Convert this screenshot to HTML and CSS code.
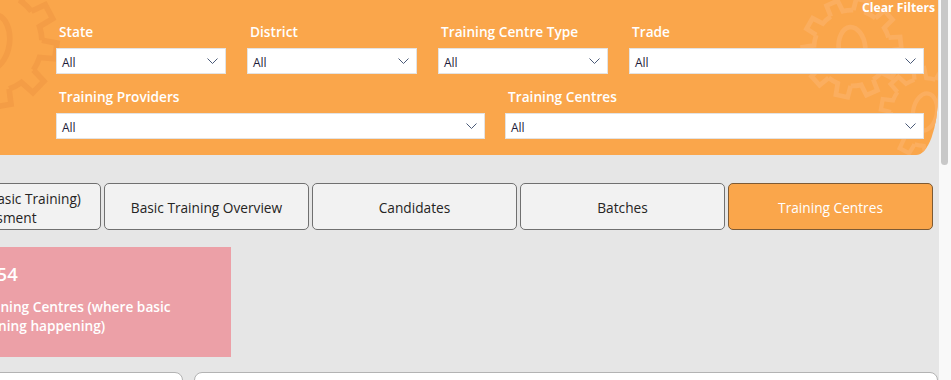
FILE: index.html
```html
<!DOCTYPE html>
<html lang="en">
<head>
<meta charset="utf-8">
<title>Training Centres</title>
<link rel="stylesheet" href="styles.css">
</head>
<body>
<div class="page">
  <div class="main">
    <header class="filters">
      <svg class="deco" width="938" height="155" viewBox="0 0 938 155" aria-hidden="true">
        <defs>
          <path id="tooth" d="M39.39 -6.95 L51.61 -6.34 L51.61 6.34 L39.39 6.95 A40 40 0 0 1 35.95 17.53" />
          <g id="gear">
            <use href="#tooth" />
            <use href="#tooth" transform="rotate(36)" />
            <use href="#tooth" transform="rotate(72)" />
            <use href="#tooth" transform="rotate(108)" />
            <use href="#tooth" transform="rotate(144)" />
            <use href="#tooth" transform="rotate(180)" />
            <use href="#tooth" transform="rotate(216)" />
            <use href="#tooth" transform="rotate(252)" />
            <use href="#tooth" transform="rotate(288)" />
            <use href="#tooth" transform="rotate(324)" />
            <ellipse cx="0" cy="0" rx="14" ry="22" />
          </g>
        </defs>
        <g class="g-dark">
          <use href="#gear" transform="translate(-8 42) scale(1.25) rotate(8)" />
        </g>
        <g class="g-light">
          <use href="#gear" transform="translate(852 48) scale(0.95) rotate(-6)" />
          <use href="#gear" transform="translate(925 112) scale(0.85) rotate(10)" />
        </g>
      </svg>
      <div class="clear">Clear Filters</div>
      <div class="row row1">
        <div class="field">
          <div class="label">State</div>
          <div class="select"><span>All</span><svg class="chev" width="11" height="6" viewBox="0 0 11 6"><path d="M0.5 0.5 L5.5 5.5 L10.5 0.5" /></svg></div>
        </div>
        <div class="field">
          <div class="label">District</div>
          <div class="select"><span>All</span><svg class="chev" width="11" height="6" viewBox="0 0 11 6"><path d="M0.5 0.5 L5.5 5.5 L10.5 0.5" /></svg></div>
        </div>
        <div class="field">
          <div class="label">Training Centre Type</div>
          <div class="select"><span>All</span><svg class="chev" width="11" height="6" viewBox="0 0 11 6"><path d="M0.5 0.5 L5.5 5.5 L10.5 0.5" /></svg></div>
        </div>
        <div class="field">
          <div class="label">Trade</div>
          <div class="select"><span>All</span><svg class="chev" width="11" height="6" viewBox="0 0 11 6"><path d="M0.5 0.5 L5.5 5.5 L10.5 0.5" /></svg></div>
        </div>
      </div>
      <div class="row row2">
        <div class="field">
          <div class="label">Training Providers</div>
          <div class="select"><span>All</span><svg class="chev" width="11" height="6" viewBox="0 0 11 6"><path d="M0.5 0.5 L5.5 5.5 L10.5 0.5" /></svg></div>
        </div>
        <div class="field">
          <div class="label">Training Centres</div>
          <div class="select"><span>All</span><svg class="chev" width="11" height="6" viewBox="0 0 11 6"><path d="M0.5 0.5 L5.5 5.5 L10.5 0.5" /></svg></div>
        </div>
      </div>
    </header>

    <nav class="tabs">
      <div class="tab">Readiness (Basic Training) Assessment</div>
      <div class="tab">Basic Training Overview</div>
      <div class="tab">Candidates</div>
      <div class="tab">Batches</div>
      <div class="tab active">Training Centres</div>
    </nav>

    <section class="kpi">
      <div class="kpi-value">354</div>
      <div class="kpi-label">Training Centres (where basic training happening)</div>
    </section>

    <div class="cards">
      <div class="card card-a"></div>
      <div class="card card-b"></div>
    </div>
  </div>
  <div class="scrollbar"><div class="thumb"></div></div>
</div>
</body>
</html>
```

FILE: styles.css
```css
* { box-sizing: border-box; }

html, body {
  margin: 0;
  padding: 0;
  height: 380px;
  overflow: hidden;
  background: #e6e6e6;
  font-family: "Open Sans", "Noto Sans", "Liberation Sans", sans-serif;
}

.page {
  display: flex;
  width: 951px;
  height: 380px;
}

.main {
  width: 939px;
  flex: 0 0 939px;
  overflow: hidden;
}

.scrollbar {
  flex: 0 0 12px;
  background: #f9f9f9;
  padding-left: 2px;
}

.thumb {
  width: 7px;
  height: 165px;
  background: #c8c8c8;
  border-radius: 0 0 4px 4px;
}

/* ---------- filter header ---------- */
.filters {
  position: relative;
  width: 938px;
  height: 155px;
  background: #faa64b;
  border-bottom-right-radius: 22px 60px;
  padding: 0 14px 0 56px;
  overflow: hidden;
}

.deco {
  position: absolute;
  left: 0;
  top: 0;
  pointer-events: none;
}

.g-dark { fill: none; stroke: #f49d46; stroke-width: 4.5; }
.g-light { fill: none; stroke: #fbae5f; stroke-width: 5; }

.clear {
  position: relative;
  height: 15px;
  line-height: 15px;
  margin-right: -11px;
  text-align: right;
  color: #ffffff;
  font-weight: 700;
  font-size: 12.2px;
}

.row {
  position: relative;
  display: grid;
}

.row1 {
  margin-top: 8px;
  grid-template-columns: 170px 170px 170px 1fr;
  column-gap: 21px;
}

.row2 {
  margin-top: 14px;
  grid-template-columns: 429px 1fr;
  column-gap: 20px;
}

.label {
  height: 18px;
  line-height: 18px;
  padding-left: 3px;
  margin-bottom: 7px;
  color: #ffffff;
  font-weight: 600;
  font-size: 13.7px;
}

.select {
  display: flex;
  align-items: center;
  justify-content: space-between;
  height: 26px;
  background: #ffffff;
  border: 1px solid #e3e3e3;
  padding: 2px 7px 0 5px;
  font-size: 12px;
  color: #1c1c3a;
}

.chev {
  margin-top: -2px;
}

.chev path {
  fill: none;
  stroke: #4a5a78;
  stroke-width: 1;
}

/* ---------- tabs ---------- */
.tabs {
  display: flex;
  gap: 3px;
  margin-top: 28px;
  margin-left: -104px;
}

.tab {
  flex: 0 0 205px;
  height: 47px;
  display: flex;
  align-items: center;
  justify-content: center;
  text-align: center;
  line-height: 19px;
  padding: 2px 14px 0;
  background: #f2f2f2;
  border: 1px solid #707070;
  border-radius: 5px;
  color: #252423;
  font-size: 13.7px;
}

.tab.active {
  background: #faa64b;
  border-color: #7d5a34;
  color: #ffffff;
}

/* ---------- kpi card ---------- */
.kpi {
  margin-top: 17px;
  margin-left: -40px;
  width: 271px;
  height: 110px;
  background: #eca0a7;
  padding: 16px 20px 0 15px;
  color: #ffffff;
}

.kpi-value {
  height: 22px;
  line-height: 22px;
  margin-left: 11px;
  font-size: 18.5px;
  font-weight: 600;
}

.kpi-label {
  margin-top: 12px;
  line-height: 19px;
  font-size: 13.7px;
  font-weight: 600;
}

/* ---------- bottom cards ---------- */
.cards {
  display: flex;
  gap: 11px;
  margin-top: 15px;
  margin-left: -20px;
}

.card {
  height: 60px;
  background: #ffffff;
  border: 1px solid #b3b3b3;
  border-radius: 8px 8px 0 0;
}

.card-a { flex: 0 0 203px; }
.card-b { flex: 0 0 744px; }
```
